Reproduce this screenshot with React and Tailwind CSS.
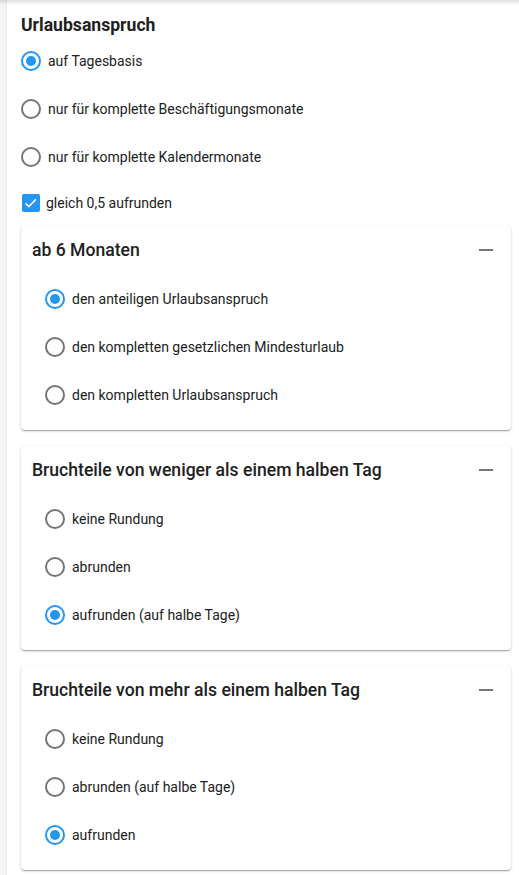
import React from "react"

const font = { fontFamily: "Roboto, 'Noto Sans', sans-serif" }

const RadioIcon = ({ checked }) => (
  <svg viewBox="0 0 24 24" className="size-6 shrink-0">
    <circle
      cx="12"
      cy="12"
      r="9"
      fill="none"
      stroke={checked ? "#2196f3" : "#757575"}
      strokeWidth="2"
    />
    {checked && <circle cx="12" cy="12" r="5" fill="#2196f3" />}
  </svg>
)

const CheckIcon = () => (
  <svg viewBox="0 0 24 24" className="size-6 shrink-0">
    <rect x="3" y="3" width="18" height="18" rx="2" fill="#2196f3" />
    <path d="M6.5 12.2l3.3 3.3 7.2-7.2" fill="none" stroke="#fff" strokeWidth="1.6" />
  </svg>
)

const RadioRow = ({ label, checked }) => (
  <div className="flex h-12 items-center gap-[5px]">
    <RadioIcon checked={checked} />
    <span className="text-[14px] leading-5 text-[#212121]">{label}</span>
  </div>
)

const Section = ({ title, options, selected }) => (
  <div className="rounded-[4px] bg-white pb-[11px] shadow-[0_1px_3px_rgba(0,0,0,0.2),0_1px_1px_rgba(0,0,0,0.14),0_2px_1px_-1px_rgba(0,0,0,0.12)]">
    <div className="flex h-[49px] items-center justify-between pb-[2px] pl-[11px] pr-[13px]">
      <h3 className="text-[17.6px] font-medium leading-6 text-[#212121]">{title}</h3>
      <svg viewBox="0 0 24 24" className="size-6">
        <path d="M19 13H5v-2h14v2z" fill="#757575" />
      </svg>
    </div>
    <div className="pl-[22px]">
      {options.map((o, i) => (
        <RadioRow key={o} label={o} checked={i === selected} />
      ))}
    </div>
  </div>
)

export default function App() {
  return (
    <div className="relative min-h-[875px] overflow-hidden bg-[#f5f5f5] pl-[7px]" style={font}>
      <div className="pointer-events-none absolute inset-x-0 top-0 h-[5px] bg-gradient-to-b from-[rgba(0,0,0,0.12)] to-transparent" />
      <div className="min-h-[875px] bg-white pb-4 pl-[14px] pr-[8px] shadow-[0_0_2px_rgba(0,0,0,0.15)]">
        <h2 className="pt-[13px] text-[17.6px] font-bold leading-6 text-[#212121]">Urlaubsanspruch</h2>
        <div className="-ml-[2px]">
          <RadioRow label="auf Tagesbasis" checked />
          <RadioRow label="nur für komplette Beschäftigungsmonate" />
          <RadioRow label="nur für komplette Kalendermonate" />
          <div className="flex h-[45px] items-center gap-[3px] pb-[1px]">
            <CheckIcon />
            <span className="text-[14px] leading-5 text-[#212121]">gleich 0,5 aufrunden</span>
          </div>
        </div>
        <div className="flex flex-col gap-4">
          <Section
            title="ab 6 Monaten"
            selected={0}
            options={[
              "den anteiligen Urlaubsanspruch",
              "den kompletten gesetzlichen Mindesturlaub",
              "den kompletten Urlaubsanspruch",
            ]}
          />
          <Section
            title="Bruchteile von weniger als einem halben Tag"
            selected={2}
            options={["keine Rundung", "abrunden", "aufrunden (auf halbe Tage)"]}
          />
          <Section
            title="Bruchteile von mehr als einem halben Tag"
            selected={2}
            options={["keine Rundung", "abrunden (auf halbe Tage)", "aufrunden"]}
          />
        </div>
      </div>
    </div>
  )
}
